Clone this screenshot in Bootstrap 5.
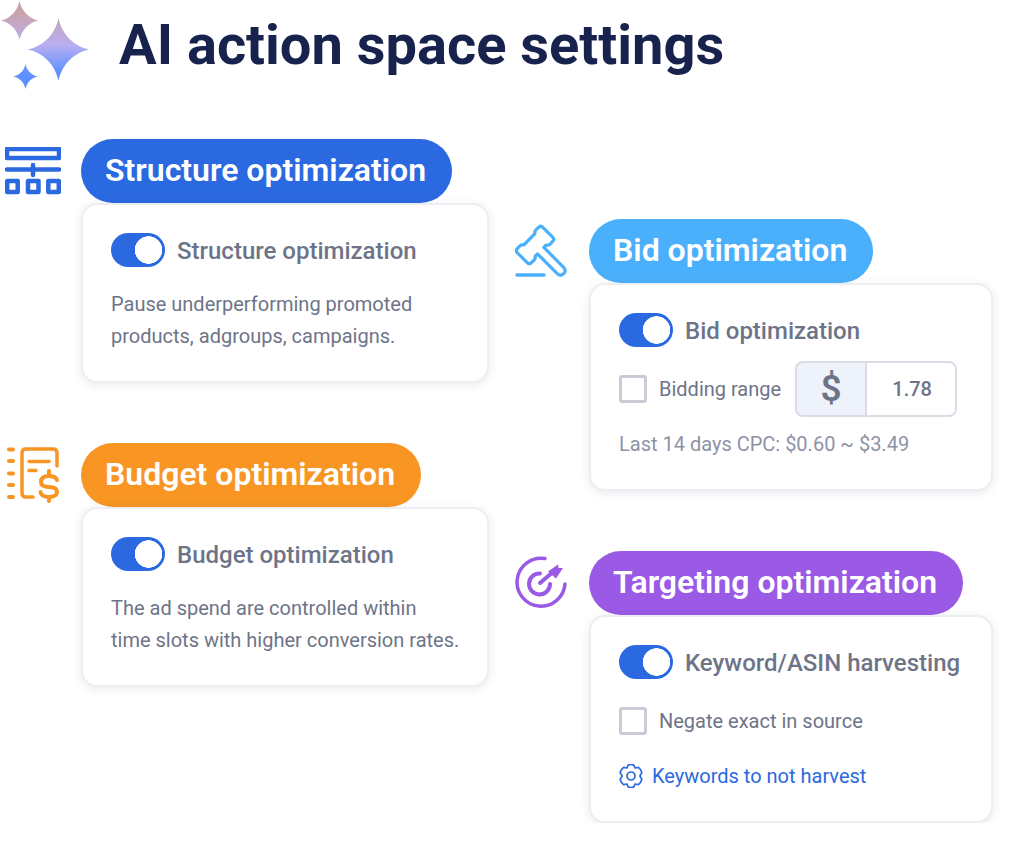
<!DOCTYPE html>
<html lang="en">
<head>
    <meta charset="UTF-8">
    <title>AI action space settings</title>
    <link href="https://cdn.jsdelivr.net/npm/bootstrap@5.3.0/dist/css/bootstrap.min.css" rel="stylesheet">
    <style>
        body {
            font-family: Roboto, "Liberation Sans", sans-serif;
            background-color: #fff;
            color: #6e7488;
            width: 1017px;
            overflow: hidden;
        }

        .page-head {
            height: 139px;
            padding-bottom: 49px;
        }

        .page-title {
            font-size: 56px;
            font-weight: 700;
            color: #17224d;
            margin: 0 0 0 29px;
            line-height: 90px;
        }

        .col-left {
            width: 515px;
            padding-left: 5px;
        }

        .col-right {
            width: 502px;
            padding-top: 80px;
        }

        .opt-gap {
            margin-bottom: 60px;
        }

        .opt-icon {
            display: block;
            flex: none;
        }

        .opt-pill {
            height: 64px;
            padding: 0 26px 0 24px;
            border-radius: 32px;
            color: #fff;
            font-size: 32px;
            font-weight: 600;
            line-height: 63px;
        }

        .pill-blue { background-color: #2b69e0; }
        .pill-orange { background-color: #f89523; }
        .pill-sky { background-color: #4bb0fb; }
        .pill-purple { background-color: #9a5ae6; }

        .opt-card {
            border: 2px solid #eceef3;
            border-radius: 16px;
            box-shadow: 0 2px 10px rgba(40, 50, 90, 0.10);
            padding: 29px 28px 0;
        }

        .card-left { width: 408px; height: 180px; }
        .card-right { width: 404px; height: 208px; }

        .form-switch.opt-switch {
            padding: 0;
            margin: 0;
            min-height: 0;
            gap: 12px;
        }

        .form-switch.opt-switch .form-check-input {
            width: 54px;
            height: 34px;
            margin: -1px 0 0;
            align-self: flex-start;
            float: none;
            border: 0;
            border-radius: 17px;
            background-color: #2b69e0;
            background-image: radial-gradient(circle at 37.500px 17px, #fff 13.500px, transparent 14px);
            background-position: 0 0;
            background-size: auto;
        }

        .switch-text {
            font-size: 24px;
            font-weight: 500;
            line-height: 34px;
            color: #6e7488;
        }

        .opt-desc {
            font-size: 20px;
            line-height: 32px;
            margin: 20px 0 0;
            color: #6e7488;
            white-space: nowrap;
        }

        .check-row {
            padding: 0;
            margin: 0;
            min-height: 0;
            gap: 12px;
        }

        .check-row .form-check-input {
            width: 28px;
            height: 28px;
            margin: 0;
            float: none;
            border: 3px solid #c9ccd6;
            border-radius: 3px;
        }

        .check-text {
            font-size: 20px;
            color: #6e7488;
            white-space: nowrap;
        }

        .bid-group {
            width: 162px;
            height: 56px;
            margin-left: 14px;
            flex-wrap: nowrap;
        }

        .bid-group .input-group-text {
            width: 70px;
            justify-content: center;
            background-color: #eef2fb;
            border: 2px solid #d9dce4;
            border-right-width: 0;
            border-radius: 8px 0 0 8px;
            font-size: 37px;
            font-weight: 600;
            color: #6e7488;
            padding: 0;
        }

        .bid-group .form-control {
            margin-left: 0 !important;
            border: 2px solid #d9dce4;
            border-radius: 0 8px 8px 0;
            font-size: 20px;
            font-weight: 500;
            color: #6e7488;
            text-align: center;
            padding: 0 0 0 2px;
        }

        .cpc-note {
            font-size: 20px;
            color: #8d93a5;
            margin: 12px 0 0;
        }

        .harvest-link {
            font-size: 20px;
            color: #2b69e0;
            text-decoration: none;
            gap: 9px;
        }
    </style>
</head>

<body>
    <div class="page-head d-flex align-items-start">
        <svg class="opt-icon" width="90" height="90" viewBox="0 0 90 90">
            <defs>
                <linearGradient id="spark" gradientUnits="userSpaceOnUse" x1="0" y1="0" x2="0" y2="90">
                    <stop offset="0" stop-color="#cf9f92"/>
                    <stop offset="0.5" stop-color="#b8aef0"/>
                    <stop offset="0.8" stop-color="#5f92ff"/>
                    <stop offset="1" stop-color="#5a8eff"/>
                </linearGradient>
            </defs>
            <path fill="url(#spark)" d="M58.500 18C61.500 34 74 46.500 89 49.500C74 52.500 61.500 65 58.500 81C55.500 65 43 52.500 28 49.500C43 46.500 55.500 34 58.500 18Z"/>
            <path fill="url(#spark)" d="M19.500 1C21.500 11 29 18.500 38 20.500C29 22.500 21.500 30 19.500 40C17.500 30 10 22.500 1 20.500C10 18.500 17.500 11 19.500 1Z"/>
            <path fill="url(#spark)" d="M25.500 64C26.700 70.500 31.500 75.300 38 76.500C31.500 77.700 26.700 82.500 25.500 89C24.300 82.500 19.500 77.700 13 76.500C19.500 75.300 24.300 70.500 25.500 64Z"/>
        </svg>
        <h1 class="page-title">AI action space settings</h1>
    </div>

    <div class="d-flex">
        <div class="col-left">
            <section class="d-flex opt-gap" style="gap:20px">
                <svg class="opt-icon mt-2" width="56" height="48" viewBox="0 0 56 48" fill="none" stroke="#2b69e0" stroke-width="4.500" stroke-linejoin="round" stroke-linecap="round">
                    <rect x="2" y="2" width="52" height="9"/>
                    <path d="M2 22.500H54M28 18V28"/>
                    <rect x="2.200" y="34" width="10.500" height="11"/>
                    <rect x="23" y="34" width="10.500" height="11"/>
                    <rect x="43.300" y="34" width="10.500" height="11"/>
                </svg>
                <div>
                    <div class="opt-pill pill-blue d-inline-block">Structure optimization</div>
                    <div class="card opt-card card-left">
                        <div class="form-check form-switch opt-switch d-flex align-items-center">
                            <input class="form-check-input" type="checkbox" role="switch" checked>
                            <span class="switch-text">Structure optimization</span>
                        </div>
                        <p class="opt-desc">Pause underperforming promoted<br>products, adgroups, campaigns.</p>
                    </div>
                </div>
            </section>
            <section class="d-flex" style="gap:20px">
                <svg class="opt-icon" width="56" height="64" viewBox="0 0 56 64" fill="none" stroke="#f89523" stroke-width="3.500" stroke-linejoin="round" stroke-linecap="round">
                    <path d="M4 6.500H8M4 18H8M4 30.500H8M4 42H8M4 54H8" stroke-width="4"/>
                    <path d="M28 54H21Q17 54 17 50V10Q17 6 21 6H48Q52 6 52 10V23"/>
                    <path d="M24 18.500H44M24 27.500H31"/>
                    <path stroke-width="4" d="M52 37C51 34 48 33 44 33C39 33 36 35 36 39C36 43 40 44 44 44C48 44 52 45 52 49C52 52 49 54 44 54C39 54 36 52 35.500 49M44 28V33M44 54V58"/>
                </svg>
                <div>
                    <div class="opt-pill pill-orange d-inline-block">Budget optimization</div>
                    <div class="card opt-card card-left">
                        <div class="form-check form-switch opt-switch d-flex align-items-center">
                            <input class="form-check-input" type="checkbox" role="switch" checked>
                            <span class="switch-text">Budget optimization</span>
                        </div>
                        <p class="opt-desc">The ad spend are controlled within<br>time slots with higher conversion rates.</p>
                    </div>
                </div>
            </section>
        </div>

        <div class="col-right">
            <section class="d-flex opt-gap" style="gap:22px">
                <svg class="opt-icon" width="52" height="64" viewBox="0 0 52 64" fill="none" stroke="#4bb0fb" stroke-width="3.200" stroke-linejoin="round" stroke-linecap="round">
                    <path transform="translate(20 26) rotate(45)" d="M-7 -18H7Q10 -18 10 -15V-11Q10 -9 8 -8V-4.500H36Q40.500 -4.500 40.500 0Q40.500 4.500 36 4.500H8V8Q10 9 10 11V15Q10 18 7 18H-7Q-10 18 -10 15V11Q-10 9 -8 8V-8Q-10 -9 -10 -11V-15Q-10 -18 -7 -18Z"/>
                    <path d="M2 56H29" stroke-width="3.500"/>
                </svg>
                <div>
                    <div class="opt-pill pill-sky d-inline-block">Bid optimization</div>
                    <div class="card opt-card card-right">
                        <div class="form-check form-switch opt-switch d-flex align-items-center">
                            <input class="form-check-input" type="checkbox" role="switch" checked>
                            <span class="switch-text">Bid optimization</span>
                        </div>
                        <div class="d-flex align-items-center" style="margin-top:13px">
                            <div class="form-check check-row d-flex align-items-center">
                                <input class="form-check-input" type="checkbox">
                                <span class="check-text">Bidding range</span>
                            </div>
                            <div class="input-group bid-group">
                                <span class="input-group-text">$</span>
                                <input class="form-control" type="text" value="1.78">
                            </div>
                        </div>
                        <p class="cpc-note">Last 14 days CPC: $0.60 ~ $3.49</p>
                    </div>
                </div>
            </section>
            <section class="d-flex" style="gap:22px">
                <svg class="opt-icon" width="52" height="64" viewBox="0 0 52 64" fill="none" stroke="#9a5ae6" stroke-width="3.500" stroke-linecap="round">
                    <path d="M30 7.500A24 24 0 1 0 50 33"/>
                    <path d="M25 22.500A10.500 10.500 0 1 0 35 33" stroke-width="4"/>
                    <path d="M25 32L38 21" stroke-width="4"/>
                    <path d="M33 20.500L43 13.500L43.500 17L48 17L41 27.500Z" fill="#9a5ae6" stroke="none"/>
                </svg>
                <div>
                    <div class="opt-pill pill-purple d-inline-block">Targeting optimization</div>
                    <div class="card opt-card card-right">
                        <div class="form-check form-switch opt-switch d-flex align-items-center">
                            <input class="form-check-input" type="checkbox" role="switch" checked>
                            <span class="switch-text text-nowrap">Keyword/ASIN harvesting</span>
                        </div>
                        <div class="form-check check-row d-flex align-items-center" style="margin-top:26px">
                            <input class="form-check-input" type="checkbox">
                            <span class="check-text">Negate exact in source</span>
                        </div>
                        <a href="#" class="harvest-link d-flex align-items-center" style="margin-top:25px">
                            <svg width="24" height="24" viewBox="1.500 1.500 21 21" fill="none" stroke="#2b69e0" stroke-width="1.500" stroke-linejoin="round">
                                <circle cx="12" cy="12" r="3.500"/>
                                <path d="M9.500 2.500Q12 1 14.500 2.500L15.500 5L18.500 4.500Q20.500 6 21.500 9L19.800 12L21.500 15Q20.500 18 18.500 19.500L15.500 19L14.500 21.500Q12 23 9.500 21.500L8.500 19L5.500 19.500Q3.500 18 2.500 15L4.200 12L2.500 9Q3.500 6 5.500 4.500L8.500 5Z"/>
                            </svg>
                            <span>Keywords to not harvest</span>
                        </a>
                    </div>
                </div>
            </section>
        </div>
    </div>
    <script src="https://cdn.jsdelivr.net/npm/bootstrap@5.3.0/dist/js/bootstrap.bundle.min.js"></script>
</body>

</html>
